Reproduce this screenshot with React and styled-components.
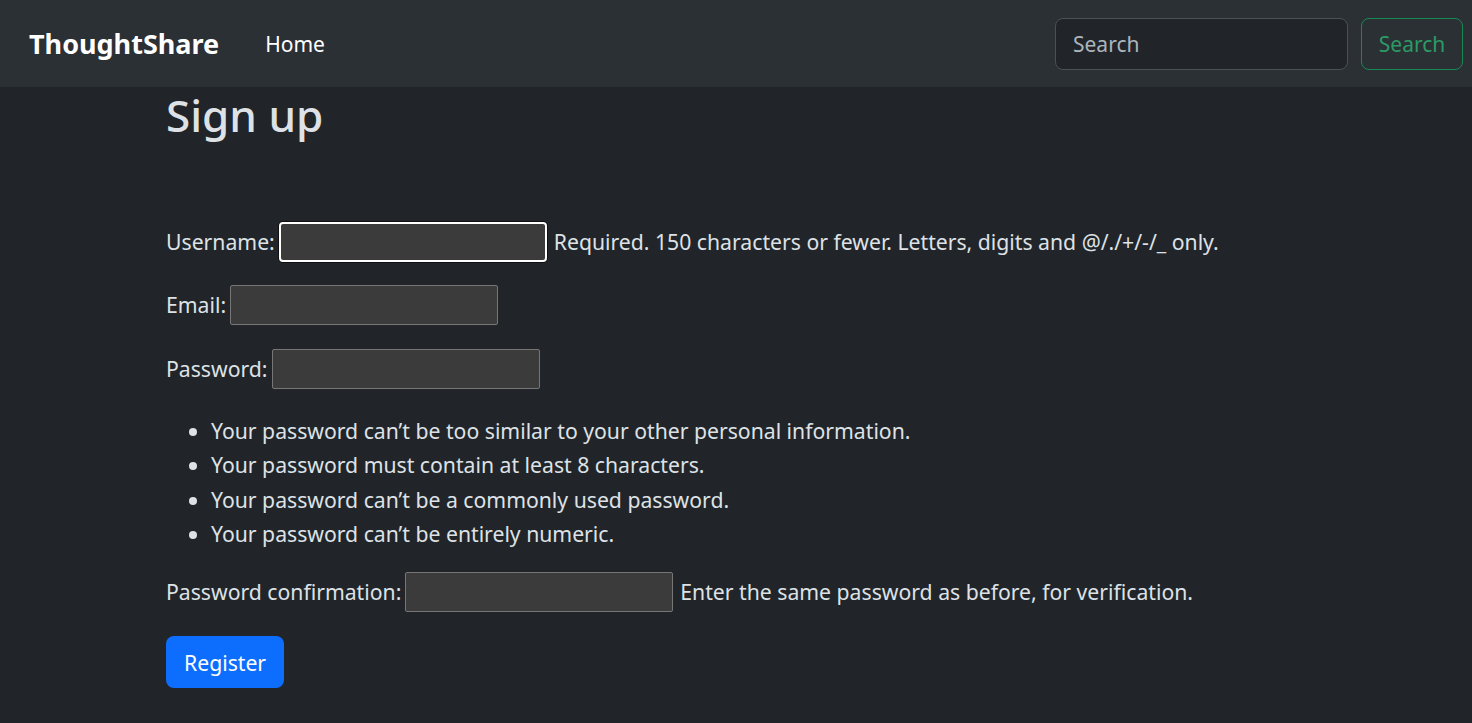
import React from 'react';
import styled, { createGlobalStyle } from 'styled-components';

const GlobalStyle = createGlobalStyle`
  html, body {
    margin: 0;
    padding: 0;
    background: #212529;
    color: #dee2e6;
    font-family: "Noto Sans", "Open Sans", sans-serif;
  }
`;

const Navbar = styled.nav`
  height: 87px;
  background: #2b3035;
  display: flex;
  align-items: center;
  padding: 0 9px 0 29px;
  box-sizing: border-box;
`;

const Brand = styled.a`
  color: #fff;
  font-weight: 700;
  font-size: 27px;
  text-decoration: none;
  margin-right: 46px;
`;

const NavLink = styled.a`
  color: #fff;
  font-size: 21px;
  text-decoration: none;
`;

const SearchForm = styled.form`
  margin-left: auto;
  display: flex;
  gap: 13px;
`;

const SearchInput = styled.input`
  width: 293px;
  height: 52px;
  box-sizing: border-box;
  background: #212529;
  border: 1px solid #495057;
  border-radius: 8px;
  color: #dee2e6;
  font: inherit;
  font-size: 21px;
  padding: 0 17px;
  outline: none;

  &::placeholder {
    color: #adb5bd;
  }
`;

const OutlineButton = styled.button`
  height: 52px;
  width: 102px;
  box-sizing: border-box;
  background: transparent;
  border: 1px solid #198754;
  border-radius: 8px;
  color: #2c9a64;
  font: inherit;
  font-size: 21px;
`;

const Container = styled.main`
  padding: 0 0 0 166px;
`;

const Title = styled.h1`
  margin: 2px 0 80px;
  font-size: 44px;
  font-weight: 500;
  line-height: 1.2;
  color: #dee2e6;
`;

const Field = styled.p`
  display: flex;
  align-items: center;
  margin: 0 0 ${p => p.$gap || 23.5}px;
  font-size: 21.2px;
  line-height: 40px;
  white-space: nowrap;
`;

const Label = styled.label`
  margin-right: 4px;
`;

const TextInput = styled.input`
  width: 268px;
  height: 40px;
  box-sizing: border-box;
  background: #3b3b3b;
  border: 1px solid ${p => (p.$focused ? '#ffffff' : '#767676')};
  border-width: ${p => (p.$focused ? '2px' : '1px')};
  border-radius: ${p => (p.$focused ? '4px' : '2px')};
  box-shadow: ${p => (p.$focused ? '0 0 0 1px #101010' : 'none')};
  color: #fff;
  font: inherit;
  padding: 0 4px;
  outline: none;
  margin-right: 7px;
`;

const HelpList = styled.ul`
  margin: 0 0 21px;
  padding-left: 45px;
  font-size: 21.2px;
  line-height: 34.4px;
`;

const PrimaryButton = styled.button`
  background: #0d6efd;
  color: #fff;
  border: none;
  border-radius: 8px;
  height: 52px;
  padding: 0 18px;
  font: inherit;
  font-size: 21.2px;
`;

export default function App() {
  return (
    <>
      <GlobalStyle />
      <Navbar>
        <Brand href="#">ThoughtShare</Brand>
        <NavLink href="#">Home</NavLink>
        <SearchForm onSubmit={e => e.preventDefault()}>
          <SearchInput type="search" placeholder="Search" />
          <OutlineButton type="submit">Search</OutlineButton>
        </SearchForm>
      </Navbar>
      <Container>
        <Title>Sign up</Title>
        <form onSubmit={e => e.preventDefault()}>
          <Field>
            <Label htmlFor="id_username">Username:</Label>
            <TextInput id="id_username" $focused />
            <span>Required. 150 characters or fewer. Letters, digits and @/./+/-/_ only.</span>
          </Field>
          <Field>
            <Label htmlFor="id_email">Email:</Label>
            <TextInput id="id_email" type="email" />
          </Field>
          <Field $gap={25}>
            <Label htmlFor="id_password1">Password:</Label>
            <TextInput id="id_password1" type="password" />
          </Field>
          <HelpList>
            <li>Your password can’t be too similar to your other personal information.</li>
            <li>Your password must contain at least 8 characters.</li>
            <li>Your password can’t be a commonly used password.</li>
            <li>Your password can’t be entirely numeric.</li>
          </HelpList>
          <Field $gap={24}>
            <Label htmlFor="id_password2">Password confirmation:</Label>
            <TextInput id="id_password2" type="password" />
            <span>Enter the same password as before, for verification.</span>
          </Field>
          <PrimaryButton type="submit">Register</PrimaryButton>
        </form>
      </Container>
    </>
  );
}
